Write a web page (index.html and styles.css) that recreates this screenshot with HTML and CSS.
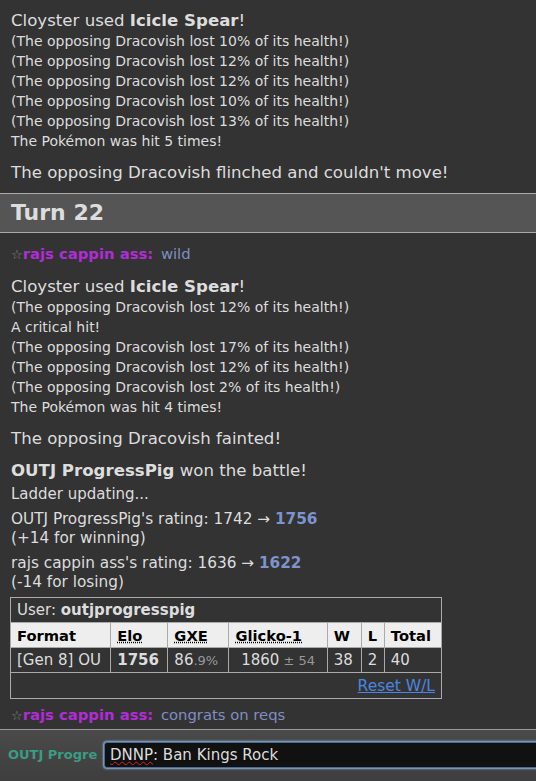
FILE: index.html
```html
<!DOCTYPE html>
<html lang="en">
<head>
  <meta charset="UTF-8">
  <title>Battle log</title>
  <link rel="stylesheet" href="styles.css">
</head>
<body>
  <div class="log">
    <div class="history first">
      <div class="big">Cloyster used <strong>Icicle Spear</strong>!</div>
      <small>(The opposing Dracovish lost 10% of its health!)</small>
      <small>(The opposing Dracovish lost 12% of its health!)</small>
      <small>(The opposing Dracovish lost 12% of its health!)</small>
      <small>(The opposing Dracovish lost 10% of its health!)</small>
      <small>(The opposing Dracovish lost 13% of its health!)</small>
      <small>The Pokémon was hit 5 times!</small>
    </div>
    <div class="history">
      <div class="big">The opposing Dracovish flinched and couldn't move!</div>
    </div>

    <h2 class="turn">Turn 22</h2>

    <div class="chat"><small class="rank">☆</small><strong class="name">rajs cappin ass:</strong> <em>wild</em></div>

    <div class="history">
      <div class="big">Cloyster used <strong>Icicle Spear</strong>!</div>
      <small>(The opposing Dracovish lost 12% of its health!)</small>
      <small>A critical hit!</small>
      <small>(The opposing Dracovish lost 17% of its health!)</small>
      <small>(The opposing Dracovish lost 12% of its health!)</small>
      <small>(The opposing Dracovish lost 2% of its health!)</small>
      <small>The Pokémon was hit 4 times!</small>
    </div>
    <div class="history">
      <div class="big">The opposing Dracovish fainted!</div>
    </div>
    <div class="history">
      <div class="big"><strong>OUTJ ProgressPig</strong> won the battle!</div>
      <div class="mid">Ladder updating...</div>
    </div>

    <div class="rating">
      <p>OUTJ ProgressPig's rating: 1742 &rarr; <strong>1756</strong><br>(+14 for winning)</p>
      <p>rajs cappin ass's rating: 1636 &rarr; <strong>1622</strong><br>(-14 for losing)</p>
    </div>

    <table class="ladder">
      <tr><td colspan="7" class="user">User: <strong>outjprogresspig</strong></td></tr>
      <tr class="head">
        <th class="c-format">Format</th>
        <th class="c-elo"><abbr>Elo</abbr></th>
        <th class="c-gxe"><abbr>GXE</abbr></th>
        <th class="c-glicko"><abbr>Glicko-1</abbr></th>
        <th class="c-w">W</th>
        <th class="c-l">L</th>
        <th class="c-total">Total</th>
      </tr>
      <tr>
        <td>[Gen 8] OU</td>
        <td><strong>1756</strong></td>
        <td>86<small>.9%</small></td>
        <td class="center">1860<small> &plusmn; 54</small></td>
        <td>38</td>
        <td>2</td>
        <td>40</td>
      </tr>
      <tr><td colspan="7" class="reset"><a href="#">Reset W/L</a></td></tr>
    </table>

    <div class="chat last"><small class="rank">☆</small><strong class="name">rajs cappin ass:</strong> <em>congrats on reqs</em></div>
  </div>

  <div class="chatbar">
    <div class="chatname">OUTJ Progre</div>
    <div class="textbox"><span class="typo">DNNP</span>: Ban Kings Rock</div>
  </div>
</body>
</html>
```

FILE: styles.css
```css
:root {
  --bg: #333;
  --text: #ddd;
  --line: #aaa;
  --name: #b22cd6;
  --msg: #7f8fc2;
}

html, body {
  margin: 0;
  height: 100%;
}

body {
  font-family: "DejaVu Sans", Verdana, sans-serif;
  background-color: var(--bg);
  color: var(--text);
  display: flex;
  flex-direction: column;
  overflow: hidden;
}

.log {
  flex: 1;
  overflow: hidden;
}

.history {
  padding: 0 11px;
  margin-top: 11px;
}

.history.first {
  margin-top: 10px;
}

.big {
  font-size: 16.6px;
  line-height: 21px;
}

.history small {
  display: block;
  font-size: 14px;
  line-height: 20px;
}

.mid {
  font-size: 15px;
  line-height: 20px;
  margin-top: 3px;
}

.turn {
  margin: 10px 0 0;
  padding: 0 11px;
  height: 38px;
  line-height: 38px;
  font-size: 22px;
  background-color: #555;
  border-top: 1px solid var(--line);
  border-bottom: 1px solid var(--line);
}

.chat {
  padding: 0 11px;
  margin-top: 11px;
  line-height: 20px;
  font-size: 14.8px;
}

.chat .rank {
  color: #888;
  font-size: 13px;
}

.chat .name {
  color: var(--name);
  margin-right: 3px;
}

.chat em {
  font-style: normal;
  font-size: 14.8px;
  color: var(--msg);
}

.chat.last {
  margin-top: 6px;
  margin-bottom: 7px;
}

.rating {
  padding: 0 11px;
  font-size: 15.3px;
  line-height: 19px;
}

.rating p {
  margin: 6px 0 0;
}

.rating strong {
  color: #7d94cc;
}

.ladder {
  margin: 5px 0 0 10px;
  width: 432px;
  border-collapse: collapse;
  border: 1px solid var(--line);
  font-size: 15px;
}

.ladder td, .ladder th {
  border: 1px solid var(--line);
  padding: 0 6px;
  height: 24px;
  text-align: left;
  white-space: nowrap;
}

.ladder .head th {
  background-color: #eee;
  color: #000;
  font-size: 14.7px;
}

.ladder abbr {
  text-decoration: underline dotted;
}

.ladder small {
  font-size: 13px;
  color: #999;
}

.ladder .center {
  text-align: center;
}

.c-format { width: 87px; }
.c-elo { width: 44px; }
.c-gxe { width: 48px; }
.c-glicko { width: 85px; }
.c-w { width: 21px; }
.c-l { width: 10px; }
.c-total { width: 44px; }

.ladder .reset {
  text-align: right;
  height: 25px;
  font-size: 15.5px;
}

.ladder .reset a {
  color: #4a86e0;
}

.chatbar {
  height: 49px;
  border-top: 1px solid #999;
  background: linear-gradient(#4a4a4a, #3e3e3e);
  display: flex;
  align-items: center;
  gap: 4px;
  padding-bottom: 2px;
}

.chatname {
  width: 92px;
  padding-left: 8px;
  overflow: hidden;
  white-space: nowrap;
  color: #3a9c84;
  font-weight: bold;
  font-size: 13px;
}

.textbox {
  flex: 1;
  height: 24px;
  line-height: 24px;
  margin-right: -10px;
  padding: 0 5px;
  background-color: #111;
  color: #ddd;
  font-size: 15px;
  border: 1px solid #4b6d93;
  border-radius: 3px;
  box-shadow: 0 0 2px 1px #8ab4dd;
}

.typo {
  text-decoration: underline wavy #e02020;
  text-decoration-thickness: 1px;
}
```
